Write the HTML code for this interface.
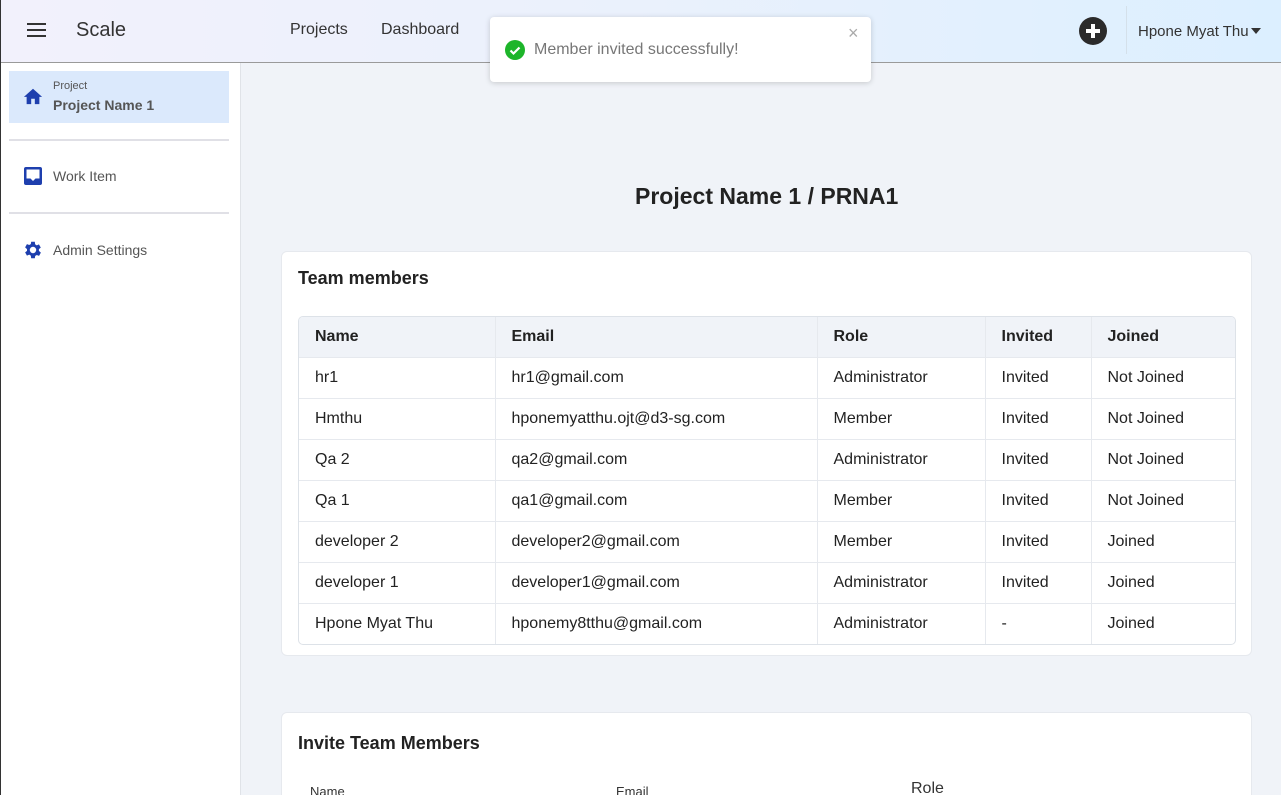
<!DOCTYPE html>
<html><head><meta charset="utf-8"><style>
*{box-sizing:border-box;margin:0;padding:0}
html,body{width:1281px;height:795px;overflow:hidden}
body{background:#f0f3f8;font-family:"Liberation Sans",sans-serif;position:relative}
.hdr{position:absolute;left:0;top:0;width:1281px;height:63px;background:linear-gradient(90deg,#f2f1fc 0%,#eaf1fc 50%,#dcefff 100%);border-bottom:1px solid #9a9a9a}
.side{position:absolute;left:0;top:63px;width:241px;height:732px;background:#fff;border-right:1px solid #e0e3e8}
.t{position:absolute;white-space:nowrap}
.card{position:absolute;background:#fff;border-radius:6px;border:1px solid #e6e9ee}
table{border-collapse:collapse;font-size:16px;color:#222}
td,th{height:41px;padding-left:16px;text-align:left;border-right:1px solid #e6e9ee;border-bottom:1px solid #e6e9ee}
th{background:#f0f3f8;height:40px;font-weight:bold}
td:last-child,th:last-child{border-right:none}
tr:last-child td{border-bottom:none}
</style></head><body>
<div style="position:absolute;left:0;top:0;width:1px;height:795px;background:#333;z-index:5"></div>
<div class="hdr">
 <div style="position:absolute;left:27px;top:23px;width:19px;height:2px;background:#333;box-shadow:0 6px 0 #333,0 12px 0 #333"></div>
 <div class="t" style="left:76px;top:19px;font-size:20px;color:#333">Scale</div>
 <div class="t" style="left:290px;top:21px;font-size:16px;color:#333">Projects</div>
 <div class="t" style="left:381px;top:21px;font-size:16px;color:#333">Dashboard</div>
 <div style="position:absolute;left:1079px;top:17px;width:28px;height:28px;border-radius:50%;background:#2b2b2b"></div>
 <div style="position:absolute;left:1086px;top:29px;width:14px;height:4px;background:#fff"></div>
 <div style="position:absolute;left:1091px;top:24px;width:4px;height:14px;background:#fff"></div>
 <div style="position:absolute;left:1126px;top:6px;width:1px;height:48px;background:#d4e0ea"></div>
 <div class="t" style="left:1138px;top:23px;font-size:15px;color:#333">Hpone Myat Thu</div>
 <div style="position:absolute;left:1251px;top:28px;border-left:5px solid transparent;border-right:5px solid transparent;border-top:6px solid #333"></div>
</div>
<div class="side">
 <div style="position:absolute;left:9px;top:8px;width:220px;height:52px;background:#dbe9fc"></div>
 <svg style="position:absolute;left:22px;top:23px" width="22" height="20" viewBox="0 0 24 22"><path d="M10 20v-6h4v6h5v-8h3L12 3 2 12h3v8z" fill="#1e3fae"/></svg>
 <div class="t" style="left:53px;top:17px;font-size:11px;color:#555">Project</div>
 <div class="t" style="left:53px;top:34px;font-size:14px;font-weight:bold;color:#555">Project Name 1</div>
 <div style="position:absolute;left:9px;top:76px;width:220px;height:2px;background:#e0e0e6"></div>
 <svg style="position:absolute;left:23px;top:103px" width="20" height="20" viewBox="0 0 20 20"><rect x="1" y="1" width="18" height="18" rx="2" fill="#1e3fae"/><path d="M3.5 3.5h13v9h-4l-2.5 2.5-2.5-2.5h-4z" fill="#fff"/></svg>
 <div class="t" style="left:53px;top:105px;font-size:14px;color:#555">Work Item</div>
 <div style="position:absolute;left:9px;top:149px;width:220px;height:2px;background:#e0e0e6"></div>
 <svg style="position:absolute;left:22px;top:176px" width="22" height="22" viewBox="0 0 24 24"><path fill="#1e3fae" d="M19.4 13a7.5 7.5 0 000-2l2.1-1.6-2-3.5-2.5 1a7 7 0 00-1.7-1L15 3h-4l-.4 2.6a7 7 0 00-1.7 1l-2.5-1-2 3.5L6.5 11a7.5 7.5 0 000 2l-2.1 1.6 2 3.5 2.5-1a7 7 0 001.7 1L11 21h4l.4-2.6a7 7 0 001.7-1l2.5 1 2-3.5zM13 15.5a3.5 3.5 0 110-7 3.5 3.5 0 010 7z" transform="translate(-1 0)"/></svg>
 <div class="t" style="left:53px;top:179px;font-size:14px;color:#555">Admin Settings</div>
</div>
<div style="position:absolute;left:490px;top:17px;width:381px;height:65px;background:#fff;border-radius:4px;box-shadow:0 1px 6px rgba(0,0,0,.18)"></div>
<div style="position:absolute;left:505px;top:40px;width:20px;height:20px;border-radius:50%;background:#1db52a"></div>
<svg style="position:absolute;left:505px;top:40px" width="20" height="20"><path d="M5.5 10.5l3 3 6-6" stroke="#fff" stroke-width="2.2" fill="none"/></svg>
<div class="t" style="left:534px;top:41px;font-size:16px;color:#777">Member invited successfully!</div>
<div class="t" style="left:848px;top:23px;font-size:18px;color:#aaa">×</div>
<div class="t" style="left:635px;top:183px;font-size:23px;font-weight:bold;color:#222">Project Name 1 / PRNA1</div>
<div class="card" style="left:281px;top:251px;width:971px;height:405px">
 <div class="t" style="left:16px;top:16px;font-size:18px;font-weight:bold;color:#222">Team members</div>
 <div style="position:absolute;left:16px;top:64px;width:938px;border:1px solid #dde2e8;border-radius:5px;overflow:hidden">
 <table style="width:936px">
  <tr><th style="width:196px">Name</th><th style="width:322px">Email</th><th style="width:168px">Role</th><th style="width:106px">Invited</th><th>Joined</th></tr>
  <tr><td>hr1</td><td>hr1@gmail.com</td><td>Administrator</td><td>Invited</td><td>Not Joined</td></tr>
  <tr><td>Hmthu</td><td>hponemyatthu.ojt@d3-sg.com</td><td>Member</td><td>Invited</td><td>Not Joined</td></tr>
  <tr><td>Qa 2</td><td>qa2@gmail.com</td><td>Administrator</td><td>Invited</td><td>Not Joined</td></tr>
  <tr><td>Qa 1</td><td>qa1@gmail.com</td><td>Member</td><td>Invited</td><td>Not Joined</td></tr>
  <tr><td>developer 2</td><td>developer2@gmail.com</td><td>Member</td><td>Invited</td><td>Joined</td></tr>
  <tr><td>developer 1</td><td>developer1@gmail.com</td><td>Administrator</td><td>Invited</td><td>Joined</td></tr>
  <tr><td>Hpone Myat Thu</td><td>hponemy8tthu@gmail.com</td><td>Administrator</td><td>-</td><td>Joined</td></tr>
 </table></div>
</div>
<div class="card" style="left:281px;top:712px;width:971px;height:100px">
 <div class="t" style="left:16px;top:20px;font-size:18px;font-weight:bold;color:#222">Invite Team Members</div>
 <div class="t" style="left:28px;top:71px;font-size:13px;color:#333">Name</div>
 <div class="t" style="left:334px;top:71px;font-size:13px;color:#333">Email</div>
 <div class="t" style="left:629px;top:67px;font-size:16px;color:#333">Role</div>
</div>
</body></html>
